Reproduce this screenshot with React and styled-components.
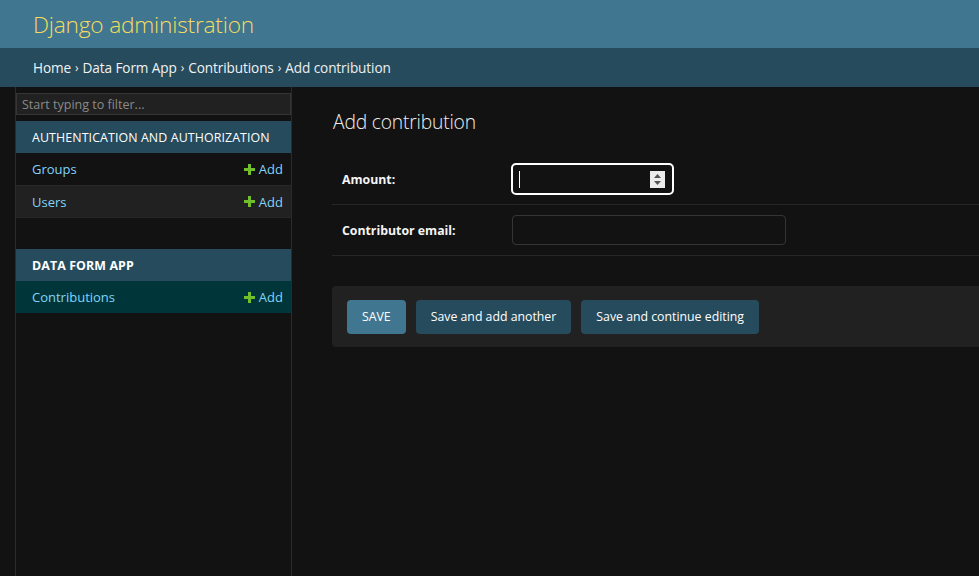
import React from 'react';
import styled, { createGlobalStyle } from 'styled-components';

const GlobalStyle = createGlobalStyle`
  html, body {
    margin: 0;
    padding: 0;
    background: #121212;
    color: #eeeeee;
    font-family: 'Open Sans', 'Noto Sans', sans-serif;
  }
  * { box-sizing: border-box; }
`;

const Page = styled.div`
  min-height: 576px;
  display: flex;
  flex-direction: column;
`;

const Header = styled.header`
  height: 48px;
  background: #417690;
  padding: 0 33px;
  display: flex;
  align-items: center;
`;

const Brand = styled.h1`
  margin: 0;
  font-size: 22.7px;
  font-weight: 300;
  color: #f5dd5d;
  letter-spacing: -0.2px;
`;

const Breadcrumbs = styled.nav`
  height: 39px;
  background: #264b5d;
  padding: 0 33px;
  display: flex;
  align-items: center;
  font-size: 13.6px;
  color: #eeeeee;
  letter-spacing: -0.1px;
`;

const Crumb = styled.span`
  color: #f2f2f2;
`;

const Sep = styled.span`
  margin: 0 4px;
  font-size: 12px;
`;

const Main = styled.div`
  flex: 1;
  display: flex;
  min-height: 489px;
`;

const Toggle = styled.div`
  width: 16px;
  flex-shrink: 0;
  border-right: 1px solid #2b2b2b;
`;

const Sidebar = styled.aside`
  width: 276px;
  flex-shrink: 0;
  border-right: 1px solid #2b2b2b;
  padding-top: 6px;
`;

const Filter = styled.input`
  display: block;
  width: 275px;
  height: 22px;
  margin: 0 0 6px;
  padding: 0 5px;
  background: #212121;
  border: 1px solid #353535;
  color: #eee;
  font-family: inherit;
  font-size: 12.5px;
  outline: none;
  &::placeholder {
    color: #8a8a8a;
  }
`;

const Module = styled.section`
  margin-bottom: 31px;
`;

const Caption = styled.div`
  height: 32px;
  background: #264b5d;
  padding: 0 16px;
  display: flex;
  align-items: center;
  font-size: 12.4px;
  font-weight: ${p => (p.current ? 700 : 400)};
  color: #ffffff;
  text-transform: uppercase;
  letter-spacing: 0.1px;
`;

const Row = styled.div`
  height: ${p => (p.alt ? 33 : 32)}px;
  display: flex;
  align-items: center;
  justify-content: space-between;
  padding: 0 8px 0 16px;
  background: ${p => (p.selected ? '#00363a' : p.alt ? '#212121' : 'transparent')};
  border-top: ${p => (p.alt ? '1px solid #272727' : 'none')};
  border-bottom: ${p => (p.alt ? '1px solid #272727' : 'none')};
  font-size: 13px;
  color: #81d4fa;
`;

const AddLink = styled.span`
  display: flex;
  align-items: center;
  gap: 4px;
  color: #81d4fa;
`;

const Content = styled.main`
  flex: 1;
  padding: 20px 0 0 40px;
  overflow: hidden;
`;

const Title = styled.h1`
  margin: 0 0 17px 1px;
  font-size: 19.3px;
  font-weight: 300;
  color: #eeeeee;
  line-height: 30px;
  letter-spacing: -0.2px;
`;

const FormRow = styled.div`
  height: 51px;
  display: flex;
  align-items: center;
  padding: 0 10px;
  border-bottom: 1px solid #272727;
`;

const Label = styled.label`
  width: 170px;
  flex-shrink: 0;
  font-size: 12.3px;
  font-weight: 700;
  color: #f5f5f5;
`;

const NumberField = styled.div`
  position: relative;
  width: 163px;
  height: 32px;
  border: 2px solid #ffffff;
  border-radius: 5px;
  margin-left: -1px;
  margin-top: -1px;
`;

const Caret = styled.span`
  position: absolute;
  left: 6px;
  top: 6px;
  width: 1px;
  height: 17px;
  background: #ffffff;
`;

const Spinner = styled.span`
  position: absolute;
  right: 7px;
  top: 6px;
  width: 15px;
  height: 17px;
  background: #ececec;
  display: flex;
  align-items: center;
  justify-content: center;
`;

const TextField = styled.input`
  width: 274px;
  height: 30px;
  background: #121212;
  border: 1px solid #353535;
  border-radius: 4px;
  color: #eee;
  outline: none;
`;

const SubmitRow = styled.div`
  margin-top: 30px;
  height: 61px;
  background: #212121;
  border-radius: 4px 0 0 4px;
  padding: 0 15px;
  display: flex;
  align-items: center;
  gap: 10px;
`;

const Button = styled.button`
  height: 34px;
  padding: 0 15px;
  border: none;
  border-radius: 4px;
  background: ${p => (p.primary ? '#417690' : '#264b5d')};
  color: #ffffff;
  font-family: inherit;
  font-size: 12.3px;
  text-transform: ${p => (p.primary ? 'uppercase' : 'none')};
  cursor: pointer;
`;

const PlusIcon = () => (
  <svg width="11" height="11" viewBox="0 0 11 11">
    <path d="M4 0h3v4h4v3H7v4H4V7H0V4h4z" fill="#70bf2b" />
  </svg>
);

const SpinIcon = () => (
  <svg width="9" height="13" viewBox="0 0 9 13">
    <path d="M4.5 1L8 5H1z" fill="#555" />
    <path d="M4.5 12L8 8H1z" fill="#555" />
  </svg>
);

const AdminRow = ({ name, alt, selected }) => (
  <Row alt={alt} selected={selected}>
    <span>{name}</span>
    <AddLink>
      <PlusIcon />
      Add
    </AddLink>
  </Row>
);

export default function App() {
  return (
    <Page>
      <GlobalStyle />
      <Header>
        <Brand>Django administration</Brand>
      </Header>
      <Breadcrumbs>
        <Crumb>Home</Crumb>
        <Sep>›</Sep>
        <Crumb>Data Form App</Crumb>
        <Sep>›</Sep>
        <Crumb>Contributions</Crumb>
        <Sep>›</Sep>
        Add contribution
      </Breadcrumbs>
      <Main>
        <Toggle />
        <Sidebar>
          <Filter placeholder="Start typing to filter..." />
          <Module>
            <Caption>Authentication and Authorization</Caption>
            <AdminRow name="Groups" />
            <AdminRow name="Users" alt />
          </Module>
          <Module>
            <Caption current>Data Form App</Caption>
            <AdminRow name="Contributions" selected />
          </Module>
        </Sidebar>
        <Content>
          <Title>Add contribution</Title>
          <FormRow>
            <Label>Amount:</Label>
            <NumberField>
              <Caret />
              <Spinner>
                <SpinIcon />
              </Spinner>
            </NumberField>
          </FormRow>
          <FormRow>
            <Label>Contributor email:</Label>
            <TextField type="email" />
          </FormRow>
          <SubmitRow>
            <Button primary>Save</Button>
            <Button>Save and add another</Button>
            <Button>Save and continue editing</Button>
          </SubmitRow>
        </Content>
      </Main>
    </Page>
  );
}
